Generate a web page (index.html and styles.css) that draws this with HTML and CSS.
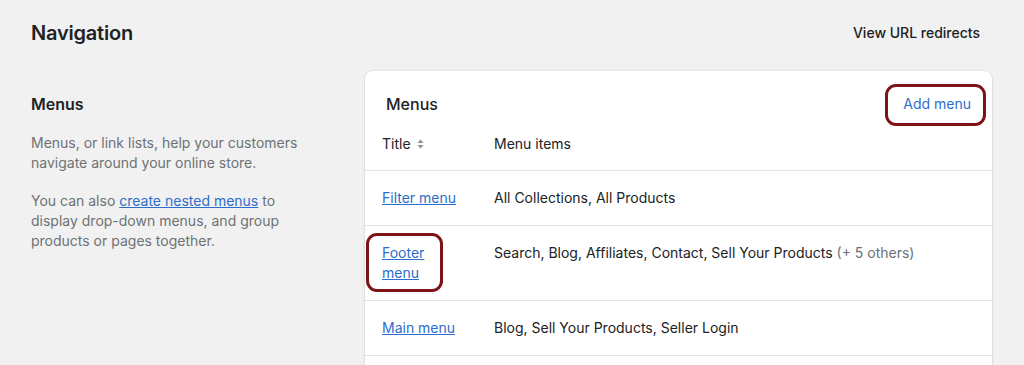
FILE: index.html
```html
<!DOCTYPE html>
<html lang="en">
<head>
  <meta charset="UTF-8" />
  <meta name="viewport" content="width=device-width, initial-scale=1" />
  <title>Navigation</title>
  <link rel="stylesheet" href="styles.css">
</head>
<body>
  <div class="page">
    <header class="pageHeader">
      <h1 class="pageTitle">Navigation</h1>
      <a class="plainAction" href="#">View URL redirects</a>
    </header>

    <div class="layout">
      <section class="aside">
        <h2 class="asideTitle">Menus</h2>
        <p>Menus, or link lists, help your customers navigate around your online store.</p>
        <p>You can also <a href="#">create nested menus</a> to display drop-down menus, and group products or pages together.</p>
      </section>

      <section class="card">
        <div class="cardHeader">
          <h2 class="cardTitle">Menus</h2>
          <a class="addMenu callout" href="#">Add menu</a>
        </div>

        <div class="row headRow">
          <div class="sortable">Title
            <svg width="7" height="10" viewBox="0 0 7 10" aria-hidden="true">
              <path d="M3.5 0.5 L6.5 4 H0.5 Z" fill="#8c9196"/>
              <path d="M3.5 9.5 L6.5 6 H0.5 Z" fill="#8c9196"/>
            </svg>
          </div>
          <div>Menu items</div>
        </div>

        <div class="row">
          <div><a href="#">Filter menu</a></div>
          <div>All Collections, All Products</div>
        </div>
        <div class="row">
          <div class="titleCell footerCallout"><a href="#">Footer menu</a></div>
          <div>Search, Blog, Affiliates, Contact, Sell Your Products <span class="muted">(+ 5 others)</span></div>
        </div>
        <div class="row">
          <div><a href="#">Main menu</a></div>
          <div>Blog, Sell Your Products, Seller Login</div>
        </div>
        <div class="row">
          <div>&nbsp;</div>
          <div>&nbsp;</div>
        </div>
      </section>
    </div>
  </div>
</body>
</html>
```

FILE: styles.css
```css
html, body {
  margin: 0;
  background: #f1f1f1;
  color: #202223;
  font-family: Inter, "Noto Sans", Arial, sans-serif;
  font-size: 14px;
  line-height: 20px;
}

a {
  color: #2c6ecb;
}

.page {
  padding: 19px 32px 0 31px;
}

.pageHeader {
  display: flex;
  justify-content: space-between;
  align-items: center;
  height: 28px;
}

.pageTitle {
  margin: 0;
  font-size: 20px;
  line-height: 28px;
  font-weight: 600;
  letter-spacing: -0.2px;
}

.plainAction {
  color: #202223;
  text-decoration: none;
  font-weight: 500;
  margin-right: 12px;
}

.layout {
  display: grid;
  grid-template-columns: 310px 1fr;
  column-gap: 24px;
  margin-top: 24px;
}

.aside {
  padding: 21px 30px 0 0;
}

.asideTitle {
  margin: 0 0 17px 0;
  font-size: 16px;
  line-height: 24px;
  font-weight: 600;
}

.aside p {
  margin: 0 0 18px 0;
  color: #6d7175;
}

.card {
  background: #fff;
  border-radius: 8px 8px 0 0;
  box-shadow: 0 0 0 1px rgba(63, 63, 68, 0.04), 0 1px 3px rgba(63, 63, 68, 0.12);
  height: 320px;
  overflow: hidden;
}

.cardHeader {
  display: flex;
  justify-content: space-between;
  align-items: center;
  padding: 23px 21px 0 21px;
}

.cardTitle {
  margin: 0;
  font-size: 16px;
  line-height: 20px;
  font-weight: 500;
}

.addMenu {
  text-decoration: none;
}

.callout {
  position: relative;
}

.callout::after {
  content: "";
  position: absolute;
  inset: -10px -15px -12px -18px;
  border: 3px solid #7d1315;
  border-radius: 11px;
}

.row {
  display: grid;
  grid-template-columns: 76px 1fr;
  column-gap: 36px;
  padding: 17px;
  border-top: 1px solid #e1e3e5;
}

.headRow {
  border-top: none;
  padding-top: 20px;
  padding-bottom: 16px;
}

.sortable {
  display: flex;
  align-items: center;
  gap: 6px;
}

.titleCell {
  position: relative;
}

.footerCallout::after {
  content: "";
  position: absolute;
  top: -10px;
  left: -16px;
  right: 15px;
  bottom: -9px;
  border: 3px solid #7d1315;
  border-radius: 11px;
}

.muted {
  color: #6d7175;
}
```
